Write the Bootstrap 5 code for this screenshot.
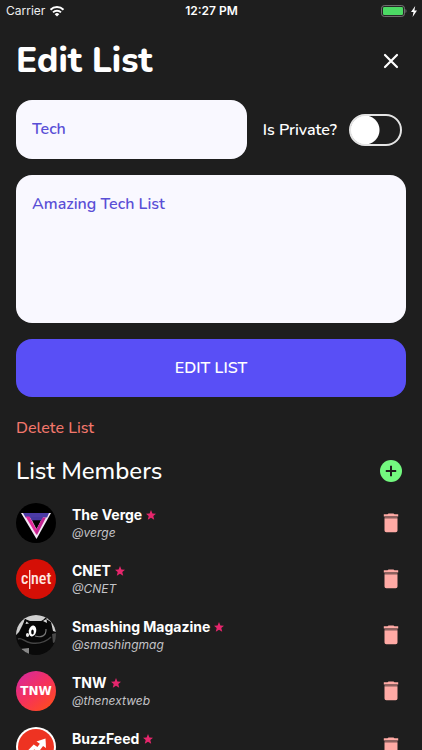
<!DOCTYPE html>
<html lang="en">
<head>
<meta charset="utf-8">
<meta name="viewport" content="width=device-width, initial-scale=1">
<title>Edit List</title>
<link rel="stylesheet" href="https://cdn.jsdelivr.net/npm/bootstrap@5.3.0/dist/css/bootstrap.min.css">
<style>
  html { scrollbar-width: none; }
  body { background: #1e1e1e; color: #fff; font: 500 16px/24px Nunito, Lato, sans-serif; }
  svg { display: block; }
  .status-bar { height: 22px; padding: 0 5px 0 6px; font: 12px/22px Inter, sans-serif; color: #eee; }
  .clock { font-weight: 600; color: #fff; }
  .page-title { font-size: 35px; line-height: 46px; font-weight: 800; }
  .close-btn { --bs-btn-padding-x: 4px; --bs-btn-padding-y: 4px; --bs-btn-border-width: 0; color: #fff; }
  .field, .field:focus { background: #f9f8ff; color: #5a4fd6; border: 0; border-radius: 16px; padding: 16px; font-size: 16px; line-height: 27px; font-weight: 600; resize: none; }
  .text-area { height: 148px; }
  .main-btn { --bs-btn-bg: #594ff6; --bs-btn-color: #fff; --bs-btn-hover-bg: #4a40e0; --bs-btn-hover-color: #fff; --bs-btn-border-width: 0; --bs-btn-border-radius: 16px; --bs-btn-font-size: 16px; --bs-btn-font-weight: 600; height: 58px; }
  .private-switch { font-weight: 600; }
  .private-switch .form-check-input { width: 53px; height: 32px; border: 2px solid #e4e4e4; background: radial-gradient(circle at 14px 14px, #fff 14px, transparent 15px) #1e1e1e; }
  .private-switch .form-check-input:checked { background: radial-gradient(circle at 35px 14px, #fff 14px, transparent 15px) #594ff6; }
  .delete-link { color: #f2776c; line-height: 22px; }
  .section-title { font-size: 24px; line-height: 32px; font-weight: 500; }
  .icon-btn { --bs-btn-padding-x: 0; --bs-btn-padding-y: 0; --bs-btn-border-width: 0; width: 30px; }
  .member { height: 56px; font-family: Inter, sans-serif; }
  .member-name { font-size: 14px; line-height: 20px; font-weight: 700; }
  .handle { font-size: 12px; line-height: 16px; font-weight: 400; font-style: italic; color: #c4c4c8; }
</style>
<script src="https://cdn.jsdelivr.net/npm/bootstrap@5.3.0/dist/js/bootstrap.bundle.min.js" defer></script>
</head>
<body>
<header class="status-bar row g-0 align-items-center">
  <div class="col d-flex align-items-center gap-1">
    <span>Carrier</span>
    <svg width="16" height="12" viewBox="0 0 16 12" fill="none" stroke="#fff" stroke-width="2" aria-hidden="true"><path d="M1.5 4.7a9.3 9.3 0 0 1 13 0M4 7.4a5.8 5.8 0 0 1 8 0"/><path d="M8 11.5 5.7 9.2a3.3 3.3 0 0 1 4.6 0z" fill="#fff" stroke="none"/></svg>
  </div>
  <div class="col-auto clock">12:27 PM</div>
  <div class="col d-flex align-items-center justify-content-end gap-1">
    <svg width="26" height="12" viewBox="0 0 26 12" aria-hidden="true"><rect x=".6" y=".6" width="22.8" height="10.8" rx="2.6" fill="none" stroke="#777"/><rect x="2" y="2" width="20" height="8" rx="1.3" fill="#4cd964"/><path d="M24.5 4v4c1.3-.6 1.3-3.4 0-4z" fill="#777"/></svg>
    <svg width="6" height="11" viewBox="0 0 6 11" fill="#fff" aria-hidden="true"><path d="M4.2 0 0 6h2.500L1.600 11 6 4.600H3.400z"/></svg>
  </div>
</header>

<main class="px-3">
  <div class="d-flex align-items-center justify-content-between pt-3">
    <h1 class="page-title mb-0">Edit List</h1>
    <button type="button" class="btn close-btn" aria-label="Close">
      <svg width="22" height="22" viewBox="0 0 22 22" stroke="currentColor" stroke-width="2.2" stroke-linecap="round"><path d="m5 5 12 12M17 5 5 17"/></svg>
    </button>
  </div>

  <form class="d-grid gap-3 mt-3">
    <div class="d-flex align-items-center gap-3">
      <div class="flex-fill"><input type="text" class="form-control field" value="Tech" aria-label="List name"></div>
      <div class="form-check form-switch private-switch d-flex align-items-center p-0 m-0 me-1">
        <label class="form-check-label text-nowrap me-2 pe-1" for="private">Is Private?</label>
        <input class="form-check-input m-0" type="checkbox" role="switch" id="private">
      </div>
    </div>
    <textarea class="form-control field text-area" aria-label="Description">Amazing Tech List</textarea>
    <button type="button" class="btn main-btn">EDIT LIST</button>
  </form>

  <a href="#" class="delete-link d-block text-decoration-none mt-3 pt-1">Delete List</a>

  <section>
    <div class="d-flex align-items-center justify-content-between mt-3 mb-2">
      <h2 class="section-title mb-0">List Members</h2>
      <button type="button" class="btn icon-btn" aria-label="Add member">
        <svg class="mx-auto" width="22" height="22" viewBox="0 0 22 22"><circle cx="11" cy="11" r="11" fill="#73f97f"/><path d="M11 5.800v10.400M5.800 11h10.400" stroke="#1e1e1e" stroke-width="2"/></svg>
      </button>
    </div>
    <svg width="0" height="0" class="position-absolute" aria-hidden="true">
      <symbol id="star" viewBox="0 0 10 10"><path fill="#e6266c" d="m5 0 1.400 3.400 3.600.3L7.300 6.100l.9 3.700L5 7.800 1.800 9.800l.9-3.700L0 3.700l3.600-.3z"/></symbol>
      <symbol id="trash" viewBox="0 0 16 20"><path fill="#ffaaa5" d="M1.500 5.200h13v12.300a1.800 1.800 0 0 1-1.800 1.800H3.300a1.800 1.800 0 0 1-1.800-1.800zM.8 1.300h3.700L5.500.5h5l1 .8h3.700v2.200H.8z"/><path fill="#8d605e" d="M1.500 3.600h13v1.500h-13z"/></symbol>
    </svg>
    <ul class="list-unstyled mb-0">
      <li class="member d-flex align-items-center gap-3">
        <svg width="40" height="40" viewBox="0 0 40 40" role="img" aria-label="The Verge avatar"><circle cx="20" cy="20" r="20" fill="#000"/><path d="M5 10h30L20.500 36z" fill="#f2e8f4"/><path d="M7 10h26l-2 4.500H9.500z" fill="#4b3ba5"/><path d="M9.500 13.500h4l8 15-1 3.500z" fill="#e22a9a"/><path d="M14.500 14.500h12L20.500 26z" fill="#050505"/><path d="M26.500 14.500h3.500L21 32l-1.500-4z" fill="#c42392"/><path d="M14 14h13l-2 3.500h-9z" fill="#46379f"/><path d="M17 17.500h7.500L20.500 25z"/></svg>
        <div class="flex-fill">
          <div class="member-name d-flex align-items-center gap-1">The Verge<svg width="10" height="10" aria-hidden="true"><use href="#star"/></svg></div>
          <div class="handle">@verge</div>
        </div>
        <button type="button" class="btn icon-btn" aria-label="Remove The Verge"><svg class="mx-auto" width="16" height="20"><use href="#trash"/></svg></button>
      </li>
      <li class="member d-flex align-items-center gap-3">
        <svg width="40" height="40" viewBox="0 0 40 40" role="img" aria-label="CNET avatar"><circle cx="20" cy="20" r="20" fill="#d50f06"/><g fill="#ffe6e0" font-family="Roboto Condensed, Liberation Sans, sans-serif" font-size="16" font-weight="500"><text x="5" y="25">c</text><text x="15" y="25">net</text></g><path d="M13.700 11v19" stroke="#ffe6e0" stroke-width="1.300"/></svg>
        <div class="flex-fill">
          <div class="member-name d-flex align-items-center gap-1">CNET<svg width="10" height="10" aria-hidden="true"><use href="#star"/></svg></div>
          <div class="handle">@CNET</div>
        </div>
        <button type="button" class="btn icon-btn" aria-label="Remove CNET"><svg class="mx-auto" width="16" height="20"><use href="#trash"/></svg></button>
      </li>
      <li class="member d-flex align-items-center gap-3">
        <svg width="40" height="40" viewBox="0 0 40 40" role="img" aria-label="Smashing Magazine avatar"><clipPath id="cat-clip"><circle cx="20" cy="20" r="20"/></clipPath><g clip-path="url(#cat-clip)"><path d="M0 0h40v40H0z" fill="#0a0a0a"/><path d="M0 20V0h40v17l-3-1-2-9-5-3-5 2H14L9 4 7 9l-4 8z" fill="#cfcfcf"/><path d="m7 11 2-7 6 5 9-1 6-6 3 8 3 9-4 7-10 4-13-2-6-8z" fill="#070707"/><path d="m9.500 9 1-2.500 2.500 2zM27 6l3.500-2 .5 4z" fill="#ddd"/><ellipse cx="16.500" cy="16" rx="3.700" ry="5.500" fill="#fff" transform="rotate(12 16.500 16)"/><ellipse cx="16.500" cy="17" rx="1.300" ry="2.600"/><ellipse cx="11.500" cy="20" rx="1.600" ry="2" fill="#e8e8e8"/><path d="M30 14c.5 7-5 9-11 7" fill="none" stroke="#777" stroke-width="1.200"/><path d="M2 24c4-2 6 3 13 4s15-1 20-6" fill="none" stroke="#444" stroke-width="1.400"/><path d="m4 34 9-1v7H4z" fill="#888"/><path d="m36 19 4-1v9l-3 1z" fill="#4a4a4a"/></g></svg>
        <div class="flex-fill">
          <div class="member-name d-flex align-items-center gap-1">Smashing Magazine<svg width="10" height="10" aria-hidden="true"><use href="#star"/></svg></div>
          <div class="handle">@smashingmag</div>
        </div>
        <button type="button" class="btn icon-btn" aria-label="Remove Smashing Magazine"><svg class="mx-auto" width="16" height="20"><use href="#trash"/></svg></button>
      </li>
      <li class="member d-flex align-items-center gap-3">
        <svg width="40" height="40" viewBox="0 0 40 40" role="img" aria-label="TNW avatar"><defs><linearGradient id="tnw-fill" x1=".1" y1=".1" x2=".8" y2=".95"><stop stop-color="#d92a97"/><stop offset=".5" stop-color="#f5315c"/><stop offset="1" stop-color="#ff4a22"/></linearGradient></defs><circle cx="20" cy="20" r="20" fill="url(#tnw-fill)"/><text x="20" y="24" text-anchor="middle" fill="#fff" font-family="DejaVu Sans, sans-serif" font-size="12" font-weight="700">TNW</text></svg>
        <div class="flex-fill">
          <div class="member-name d-flex align-items-center gap-1">TNW<svg width="10" height="10" aria-hidden="true"><use href="#star"/></svg></div>
          <div class="handle">@thenextweb</div>
        </div>
        <button type="button" class="btn icon-btn" aria-label="Remove TNW"><svg class="mx-auto" width="16" height="20"><use href="#trash"/></svg></button>
      </li>
      <li class="member d-flex align-items-center gap-3">
        <svg width="40" height="40" viewBox="0 0 40 40" role="img" aria-label="BuzzFeed avatar"><circle cx="20" cy="20" r="20" fill="#fff"/><circle cx="20" cy="20" r="18" fill="#ee3322"/><path d="m12 26 6-6 4 2.500 4.500-6" fill="none" stroke="#fff" stroke-width="3.800"/><path d="m20.500 14.500 9-3 .5 9.500z" fill="#fff"/></svg>
        <div class="flex-fill">
          <div class="member-name d-flex align-items-center gap-1">BuzzFeed<svg width="10" height="10" aria-hidden="true"><use href="#star"/></svg></div>
          <div class="handle">@BuzzFeed</div>
        </div>
        <button type="button" class="btn icon-btn" aria-label="Remove BuzzFeed"><svg class="mx-auto" width="16" height="20"><use href="#trash"/></svg></button>
      </li>
    </ul>
  </section>
</main>
</body>
</html>
